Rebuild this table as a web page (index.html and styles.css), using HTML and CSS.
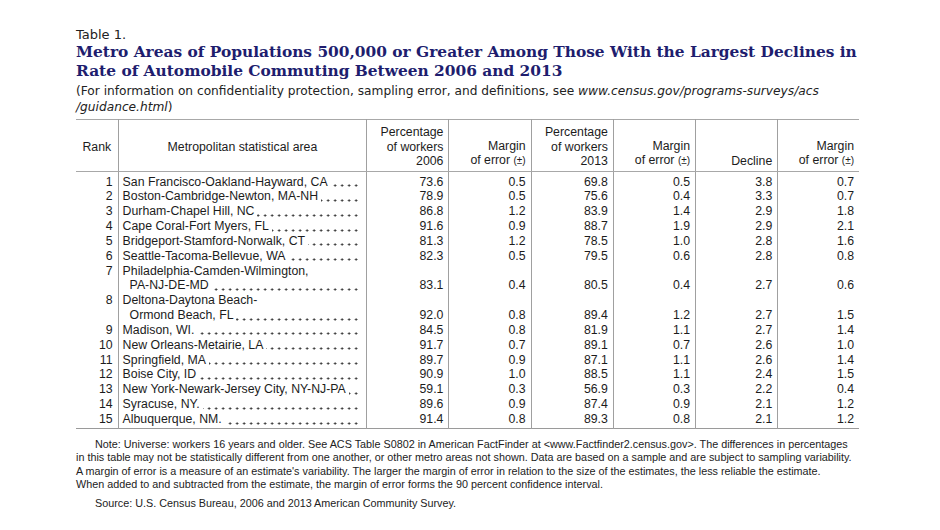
FILE: index.html
```html
<!DOCTYPE html>
<html lang="en">
<head>
<meta charset="utf-8">
<title>Table 1</title>
<link rel="stylesheet" href="styles.css">
</head>
<body>
<div class="page">
  <div class="label">Table 1.</div>
  <h1 class="title">Metro Areas of Populations 500,000 or Greater Among Those With the Largest Declines in<br>Rate of Automobile Commuting Between 2006 and 2013</h1>
  <p class="sub">(For information on confidentiality protection, sampling error, and definitions, see <i>www.census.gov/programs-surveys/acs<br>/guidance.html</i>)</p>

  <table class="data">
    <colgroup>
      <col class="c-rank"><col class="c-msa"><col class="c-num"><col class="c-num"><col class="c-num"><col class="c-num"><col class="c-num"><col class="c-last">
    </colgroup>
    <thead>
      <tr>
        <th class="rank mid">Rank</th>
        <th class="msa mid">Metropolitan statistical area</th>
        <th>Percentage<br>of workers<br>2006</th>
        <th>Margin<br>of error <span class="pm">(±)</span></th>
        <th>Percentage<br>of workers<br>2013</th>
        <th>Margin<br>of error <span class="pm">(±)</span></th>
        <th>Decline</th>
        <th>Margin<br>of error <span class="pm">(±)</span></th>
      </tr>
    </thead>
    <tbody>
      <tr class="first"><td class="rank">1</td><td class="msa"><div class="name"><span class="txt">San Francisco-Oakland-Hayward, CA</span></div></td><td>73.6</td><td>0.5</td><td>69.8</td><td>0.5</td><td>3.8</td><td>0.7</td></tr>
      <tr><td class="rank">2</td><td class="msa"><div class="name"><span class="txt">Boston-Cambridge-Newton, MA-NH</span></div></td><td>78.9</td><td>0.5</td><td>75.6</td><td>0.4</td><td>3.3</td><td>0.7</td></tr>
      <tr><td class="rank">3</td><td class="msa"><div class="name"><span class="txt">Durham-Chapel Hill, NC</span></div></td><td>86.8</td><td>1.2</td><td>83.9</td><td>1.4</td><td>2.9</td><td>1.8</td></tr>
      <tr><td class="rank">4</td><td class="msa"><div class="name"><span class="txt">Cape Coral-Fort Myers, FL</span></div></td><td>91.6</td><td>0.9</td><td>88.7</td><td>1.9</td><td>2.9</td><td>2.1</td></tr>
      <tr><td class="rank">5</td><td class="msa"><div class="name"><span class="txt">Bridgeport-Stamford-Norwalk, CT</span></div></td><td>81.3</td><td>1.2</td><td>78.5</td><td>1.0</td><td>2.8</td><td>1.6</td></tr>
      <tr><td class="rank">6</td><td class="msa"><div class="name"><span class="txt">Seattle-Tacoma-Bellevue, WA</span></div></td><td>82.3</td><td>0.5</td><td>79.5</td><td>0.6</td><td>2.8</td><td>0.8</td></tr>
      <tr><td class="rank top">7</td><td class="msa"><div>Philadelphia-Camden-Wilmington,</div><div class="name indent"><span class="txt">PA-NJ-DE-MD</span></div></td><td>83.1</td><td>0.4</td><td>80.5</td><td>0.4</td><td>2.7</td><td>0.6</td></tr>
      <tr><td class="rank top">8</td><td class="msa"><div>Deltona-Daytona Beach-</div><div class="name indent"><span class="txt">Ormond Beach, FL</span></div></td><td>92.0</td><td>0.8</td><td>89.4</td><td>1.2</td><td>2.7</td><td>1.5</td></tr>
      <tr><td class="rank">9</td><td class="msa"><div class="name"><span class="txt">Madison, WI.</span></div></td><td>84.5</td><td>0.8</td><td>81.9</td><td>1.1</td><td>2.7</td><td>1.4</td></tr>
      <tr><td class="rank">10</td><td class="msa"><div class="name"><span class="txt">New Orleans-Metairie, LA</span></div></td><td>91.7</td><td>0.7</td><td>89.1</td><td>0.7</td><td>2.6</td><td>1.0</td></tr>
      <tr><td class="rank">11</td><td class="msa"><div class="name"><span class="txt">Springfield, MA</span></div></td><td>89.7</td><td>0.9</td><td>87.1</td><td>1.1</td><td>2.6</td><td>1.4</td></tr>
      <tr><td class="rank">12</td><td class="msa"><div class="name"><span class="txt">Boise City, ID</span></div></td><td>90.9</td><td>1.0</td><td>88.5</td><td>1.1</td><td>2.4</td><td>1.5</td></tr>
      <tr><td class="rank">13</td><td class="msa"><div class="name"><span class="txt">New York-Newark-Jersey City, NY-NJ-PA</span></div></td><td>59.1</td><td>0.3</td><td>56.9</td><td>0.3</td><td>2.2</td><td>0.4</td></tr>
      <tr><td class="rank">14</td><td class="msa"><div class="name"><span class="txt">Syracuse, NY.</span></div></td><td>89.6</td><td>0.9</td><td>87.4</td><td>0.9</td><td>2.1</td><td>1.2</td></tr>
      <tr class="last"><td class="rank">15</td><td class="msa"><div class="name"><span class="txt">Albuquerque, NM.</span></div></td><td>91.4</td><td>0.8</td><td>89.3</td><td>0.8</td><td>2.1</td><td>1.2</td></tr>
    </tbody>
  </table>

  <div class="notes">
    <p class="note">Note: Universe: workers 16 years and older. See ACS Table S0802 in American FactFinder at &lt;www.Factfinder2.census.gov&gt;. The differences in percentages<br>in this table may not be statistically different from one another, or other metro areas not shown. Data are based on a sample and are subject to sampling variability.<br>A margin of error is a measure of an estimate's variability. The larger the margin of error in relation to the size of the estimates, the less reliable the estimate.<br>When added to and subtracted from the estimate, the margin of error forms the 90 percent confidence interval.</p>
    <p class="source">Source: U.S. Census Bureau, 2006 and 2013 American Community Survey.</p>
  </div>
</div>
</body>
</html>
```

FILE: styles.css
```css
html, body {
  margin: 0;
  padding: 0;
  background: #ffffff;
}

body {
  overflow: hidden;
  color: #1c1c1c;
}

.page {
  width: 783px;
  margin-left: 76px;
  padding-top: 26px;
}

.label {
  font-family: "DejaVu Sans", Verdana, sans-serif;
  font-size: 13px;
  line-height: 17px;
  color: #222;
}

.title {
  margin: 0;
  font-family: "DejaVu Serif", "Liberation Serif", serif;
  font-weight: bold;
  font-size: 15.4px;
  line-height: 19px;
  color: #201d6e;
  white-space: nowrap;
}

.sub {
  margin: 2px 0 0 0;
  font-family: "DejaVu Sans", Verdana, sans-serif;
  font-size: 12.2px;
  line-height: 16px;
  color: #222;
  white-space: nowrap;
}

.data {
  margin-top: 4px;
  width: 783px;
  table-layout: fixed;
  border-collapse: collapse;
  font-family: "Liberation Sans", Arial, sans-serif;
  font-size: 12.3px;
  line-height: 14.85px;
  color: #1c1c1c;
  border-top: 1px solid #a8a8a8;
  border-bottom: 1px solid #9a9a9a;
}

.c-rank { width: 42px; }
.c-msa { width: 248px; }
.c-num { width: 82px; }
.c-last { width: 81px; }

.data th {
  font-weight: normal;
  text-align: right;
  vertical-align: bottom;
  padding: 5px 5px 2px 0;
  line-height: 14.5px;
  border-bottom: 1px solid #a8a8a8;
  border-left: 1px solid #a0a0a0;
  white-space: nowrap;
}

.data th.mid {
  vertical-align: middle;
  text-align: center;
}

.data th.rank {
  border-left: none;
  padding: 5px 0 2px 0;
}

.data th.msa {
  padding: 5px 0 2px 0;
}

.pm {
  font-size: 10px;
}

.data td {
  text-align: right;
  vertical-align: bottom;
  padding: 0 5px 0 0;
  border-left: 1px solid #a0a0a0;
  white-space: nowrap;
}

.data td.rank {
  border-left: none;
  padding-right: 5px;
}

.data td.rank.top {
  vertical-align: top;
}

.data td.msa {
  text-align: left;
  padding: 0 7px 0 4px;
}

.data tr.first td {
  padding-top: 3px;
}

.data tr.last td {
  padding-bottom: 1px;
}

/* dot leader: dots run behind the row, the name covers them with white */
.name {
  display: flex;
  background-image: radial-gradient(circle, #262626 0, #262626 0.85px, rgba(38, 38, 38, 0) 1.3px);
  background-size: 7px 3px;
  background-repeat: repeat-x;
  background-position: right 0 top 9.5px;
}

.name .txt {
  flex: none;
  background: #ffffff;
  padding-right: 3px;
}

.name.indent {
  margin-left: 7px;
}

.notes {
  font-family: "Liberation Sans", Arial, sans-serif;
  font-size: 10.8px;
  line-height: 13.5px;
  color: #222;
  padding-top: 9px;
}

.notes p {
  margin: 0;
  text-indent: 19px;
  white-space: nowrap;
}

.notes .source {
  margin-top: 5px;
}
```
